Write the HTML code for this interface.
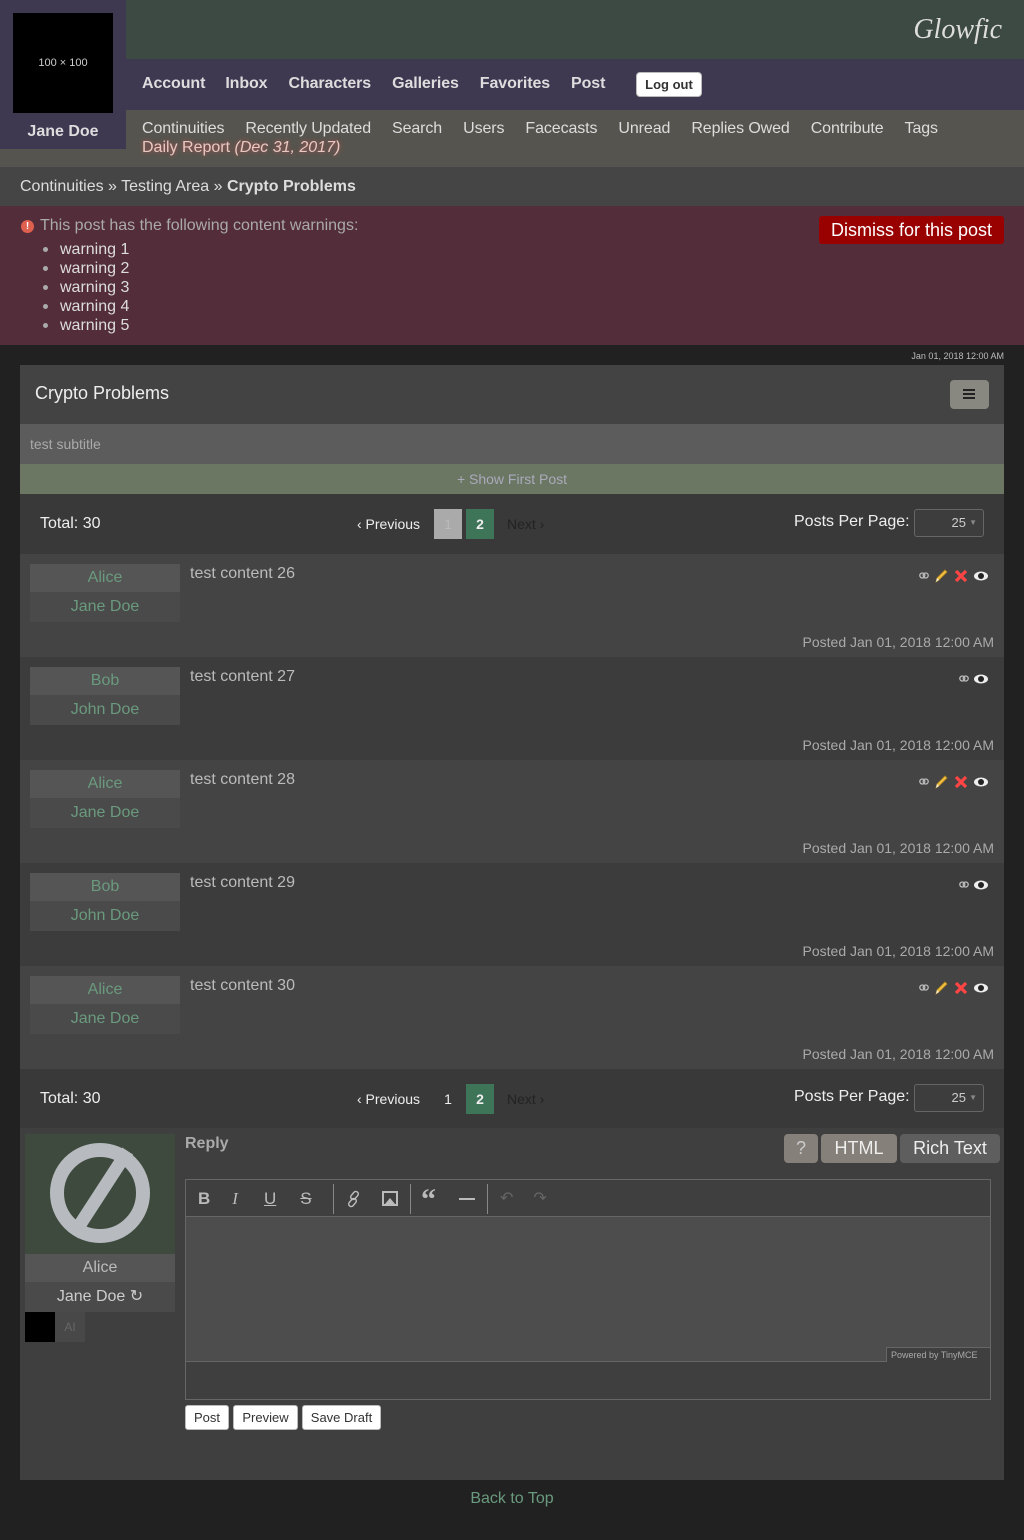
<!DOCTYPE html>
<html><head><meta charset="utf-8"><style>
*{box-sizing:border-box;margin:0;padding:0}
body{width:1024px;height:1540px;background:#212121;font-family:"Liberation Sans",sans-serif;position:relative;overflow:hidden;color:#ccc}
.a{position:absolute}
.t{white-space:nowrap}
.w{height:19px;line-height:19px}
.w span{display:inline-block;width:18px;height:19px;position:relative;vertical-align:top}
.w span:before{content:"";position:absolute;left:1px;top:7px;width:5px;height:5px;border-radius:50%;background:#aaa}
</style></head><body>
<div class="a" style="left:0;top:0;width:1024px;height:59px;background:#3c4a43"></div>
<div class="a t" style="right:22px;top:14px;font-family:'Liberation Serif',serif;font-style:italic;font-size:28px;color:#ddd">Glowfic</div>
<div class="a" style="left:0;top:59px;width:1024px;height:51px;background:#3e3851"></div>
<div class="a" style="left:0;top:110px;width:1024px;height:57px;background:#55544e"></div>
<div class="a" style="left:0;top:0;width:126px;height:149px;background:#3e3851"></div>
<div class="a" style="left:13px;top:13px;width:100px;height:100px;background:#000;color:#ccc;font-size:11px;text-align:center;line-height:100px">100 × 100</div>
<div class="a t" style="left:0;width:126px;top:123px;text-align:center;font-weight:bold;font-size:16px;color:#ddd">Jane Doe</div>
<div class="a t" style="left:142px;top:75px;font-weight:bold;font-size:16px;color:#ddd;letter-spacing:-0.1px">Account<span style="margin-left:20px">Inbox</span><span style="margin-left:21px">Characters</span><span style="margin-left:21px">Galleries</span><span style="margin-left:21px">Favorites</span><span style="margin-left:21px">Post</span></div>
<div class="a t" style="left:636px;top:72px;width:66px;height:25px;background:#fff;border:1px solid #bbb;border-radius:4px;font-size:13px;font-weight:bold;color:#333;text-align:center;line-height:23px">Log out</div>
<div class="a t" style="left:142px;top:120px;font-size:16px;color:#ddd;letter-spacing:-0.1px">Continuities<span style="margin-left:21px">Recently Updated</span><span style="margin-left:21px">Search</span><span style="margin-left:21px">Users</span><span style="margin-left:21px">Facecasts</span><span style="margin-left:21px">Unread</span><span style="margin-left:21px">Replies Owed</span><span style="margin-left:21px">Contribute</span><span style="margin-left:21px">Tags</span></div>
<div class="a t" style="left:142px;top:139px;font-size:16px;color:#e8c8c0;text-shadow:0 0 5px #b55">Daily Report <i>(Dec 31, 2017)</i></div>
<div class="a" style="left:0;top:167px;width:1024px;height:39px;background:#454545"></div>
<div class="a t" style="left:20px;top:178px;font-size:16px;color:#ddd">Continuities » Testing Area » <b>Crypto Problems</b></div>
<div class="a" style="left:0;top:206px;width:1024px;height:139px;background:#532d39"></div>
<div class="a" style="left:21px;top:220px;width:13px;height:13px;border-radius:50%;background:#e06050;color:#fff;font-size:10px;font-weight:bold;text-align:center;line-height:13px">!</div>
<div class="a t" style="left:40px;top:217px;font-size:16px;color:#aaa">This post has the following content warnings:</div>
<div class="a" style="left:42px;top:240px;font-size:16px;color:#ddd">
<div class="w"><span></span>warning 1</div><div class="w"><span></span>warning 2</div><div class="w"><span></span>warning 3</div><div class="w"><span></span>warning 4</div><div class="w"><span></span>warning 5</div></div>
<div class="a t" style="left:819px;top:216px;width:185px;height:28px;background:#900;border-radius:3px;color:#fff;font-size:18px;text-align:center;line-height:28px">Dismiss for this post</div>
<div class="a t" style="right:20px;top:351px;font-size:9px;color:#bbb">Jan 01, 2018 12:00 AM</div>
<div class="a" style="left:20px;top:365px;width:984px;height:1115px;background:#3f3f3f"></div>
<div class="a" style="left:20px;top:365px;width:984px;height:59px;background:#434343"></div>
<div class="a t" style="left:35px;top:383px;font-size:18px;color:#eee">Crypto Problems</div>
<div class="a" style="left:950px;top:380px;width:39px;height:29px;background:#888880;border-radius:4px"><div style="margin:13px 13px;width:12px;height:2px;background:#222;box-shadow:0 -4px #222,0 4px #222"></div></div>
<div class="a" style="left:20px;top:424px;width:984px;height:40px;background:#5c5c5c"></div>
<div class="a t" style="left:30px;top:436px;font-size:14px;color:#aaa">test subtitle</div>
<div class="a" style="left:20px;top:464px;width:984px;height:30px;background:#6b7663;text-align:center;font-size:14px;line-height:30px;color:#aab">+ Show First Post</div>

<div class="a" style="left:20px;top:494px;width:984px;height:60px;background:#393939"></div>
<div class="a t" style="left:40px;top:515px;font-size:16px;color:#eee">Total: 30</div>
<div class="a t" style="left:357px;top:516px;font-size:14px;color:#eee">‹ Previous</div>
<div class="a" style="left:434px;top:509px;width:28px;height:30px;background:#aaa;color:#bbb;font-size:14px;text-align:center;line-height:30px">1</div>
<div class="a" style="left:466px;top:509px;width:28px;height:30px;background:#3e7559;color:#eee;font-size:14px;font-weight:bold;text-align:center;line-height:30px">2</div>
<div class="a t" style="left:507px;top:516px;font-size:14px;color:#222">Next ›</div>
<div class="a t" style="left:794px;top:513px;font-size:16px;color:#eee">Posts Per Page:</div>
<div class="a" style="left:914px;top:509px;width:70px;height:28px;border:1px solid #666;border-radius:3px;background:#3d3d3d;color:#ccc;font-size:13px;text-align:right;padding-right:17px;line-height:26px">25<span style="position:absolute;right:6px;font-size:8px;color:#888">▼</span></div>

<div id="posts"></div>
<script>
var html='';var names=[['Alice','Jane Doe',1],['Bob','John Doe',0],['Alice','Jane Doe',1],['Bob','John Doe',0],['Alice','Jane Doe',1]];
for(var i=0;i<5;i++){var y=554+i*103;var n=names[i];
html+='<div class="a" style="left:20px;top:'+y+'px;width:984px;height:103px;background:'+(i%2?'#3c3c3c':'#444')+'"></div>';
html+='<div class="a" style="left:30px;top:'+(y+10)+'px;width:150px;height:28px;background:#555;color:#6a9a7e;font-size:16px;text-align:center;line-height:28px">'+n[0]+'</div>';
html+='<div class="a" style="left:30px;top:'+(y+38)+'px;width:150px;height:30px;background:#4a4a4a;color:#6a9a7e;font-size:16px;text-align:center;line-height:30px">'+n[1]+'</div>';
html+='<div class="a t" style="left:190px;top:'+(y+11)+'px;font-size:16px;color:#bbb">test content '+(26+i)+'</div>';
html+='<div class="a t" style="right:30px;top:'+(y+80)+'px;font-size:14px;color:#aaa">Posted Jan 01, 2018 12:00 AM</div>';
var ic='<svg width="10" height="8" viewBox="0 0 10 8" style="vertical-align:middle"><rect x="0.8" y="1" width="5" height="5" rx="2.5" fill="none" stroke="#bbb" stroke-width="1.3"/><rect x="4.2" y="1" width="5" height="5" rx="2.5" fill="none" stroke="#bbb" stroke-width="1.3"/></svg>';
if(n[2]) ic+='<svg width="16" height="16" viewBox="0 0 16 16" style="vertical-align:middle;margin-left:4px"><path d="M3 14 L4 10 L12 2 L14 4 L6 12 Z" fill="#f0c040" stroke="#b08020" stroke-width="0.8"/><path d="M3 14 L4 10 L6 12Z" fill="#eed"/></svg><svg width="16" height="16" viewBox="0 0 16 16" style="vertical-align:middle;margin-left:4px"><path d="M3 3 L13 13 M13 3 L3 13" stroke="#f44" stroke-width="3.2"/></svg>';
ic+='<svg width="16" height="12" viewBox="0 0 16 12" style="vertical-align:middle;margin-left:4px"><ellipse cx="8" cy="6" rx="7" ry="4.5" fill="#eee"/><circle cx="8" cy="6" r="3" fill="#222"/></svg>';
html+='<div class="a t" style="right:35px;top:'+(y+14)+'px;line-height:16px">'+ic+'</div>';}
document.getElementById('posts').outerHTML=html;
</script>

<div class="a" style="left:20px;top:1069px;width:984px;height:59px;background:#393939"></div>
<div class="a t" style="left:40px;top:1090px;font-size:16px;color:#eee">Total: 30</div>
<div class="a t" style="left:357px;top:1091px;font-size:14px;color:#eee">‹ Previous</div>
<div class="a" style="left:434px;top:1084px;width:28px;height:30px;color:#eee;font-size:14px;text-align:center;line-height:30px">1</div>
<div class="a" style="left:466px;top:1084px;width:28px;height:30px;background:#3e7559;color:#eee;font-size:14px;font-weight:bold;text-align:center;line-height:30px">2</div>
<div class="a t" style="left:507px;top:1091px;font-size:14px;color:#222">Next ›</div>
<div class="a t" style="left:794px;top:1088px;font-size:16px;color:#eee">Posts Per Page:</div>
<div class="a" style="left:914px;top:1084px;width:70px;height:28px;border:1px solid #666;border-radius:3px;background:#3d3d3d;color:#ccc;font-size:13px;text-align:right;padding-right:17px;line-height:26px">25<span style="position:absolute;right:6px;font-size:8px;color:#888">▼</span></div>

<div class="a" style="left:25px;top:1134px;width:150px;height:120px;background:#3f4a3e"></div>
<div class="a" style="left:50px;top:1143px;width:100px;height:100px;border-radius:50%;border:14px solid #b7bbbf"></div>
<div class="a" style="left:94px;top:1143px;width:13px;height:100px;background:#b7bbbf;transform:rotate(33deg)"></div>
<div class="a" style="left:25px;top:1254px;width:150px;height:28px;background:#555;color:#bbb;font-size:16px;text-align:center;line-height:28px">Alice</div>
<div class="a" style="left:25px;top:1282px;width:150px;height:30px;background:#4a4a4a;color:#ccc;font-size:16px;text-align:center;line-height:30px">Jane Doe ↻</div>
<div class="a" style="left:25px;top:1312px;width:30px;height:30px;background:#000"></div>
<div class="a" style="left:55px;top:1312px;width:30px;height:30px;background:#484848;color:#666;font-size:12px;text-align:center;line-height:30px">AI</div>
<div class="a t" style="left:185px;top:1135px;font-size:16px;font-weight:bold;color:#aaa">Reply</div>
<div class="a" style="left:784px;top:1134px;width:34px;height:29px;background:#858079;border-radius:4px;color:#ccc;font-size:18px;text-align:center;line-height:29px">?</div>
<div class="a" style="left:821px;top:1134px;width:76px;height:29px;background:#858079;border-radius:4px;color:#eee;font-size:18px;text-align:center;line-height:29px">HTML</div>
<div class="a" style="left:900px;top:1134px;width:100px;height:29px;background:#5e5e5e;border-radius:4px;color:#eee;font-size:18px;text-align:center;line-height:29px">Rich Text</div>
<div class="a" style="left:185px;top:1179px;width:806px;height:221px;border:1px solid #666;background:#3f3f3f"></div>
<div class="a" style="left:186px;top:1216px;width:804px;height:146px;background:#4d4d4d;border-top:1px solid #666;border-bottom:1px solid #666"></div>
<div class="a t" style="left:198px;top:1189px;font-size:17px;color:#bbb;line-height:20px">
<b>B</b><i style="margin-left:22px;font-family:'Liberation Serif',serif">I</i><u style="margin-left:26px">U</u><s style="margin-left:24px">S</s></div>
<div class="a" style="left:333px;top:1184px;width:1px;height:30px;background:#888"></div>
<svg class="a" style="left:345px;top:1190px" width="18" height="18" viewBox="0 0 18 18"><g fill="none" stroke="#bbb" stroke-width="1.5"><rect x="7" y="1" width="5" height="9" rx="2.5" transform="rotate(40 9.5 5.5)"/><rect x="5" y="8" width="5" height="9" rx="2.5" transform="rotate(40 7.5 12.5)"/></g></svg>
<div class="a" style="left:382px;top:1191px;width:16px;height:15px;border:2px solid #bbb"></div>
<svg class="a" style="left:385px;top:1196px" width="10" height="8"><path d="M0 8 L5 2 L10 8Z" fill="#bbb"/></svg>
<div class="a" style="left:410px;top:1184px;width:1px;height:30px;background:#888"></div>
<div class="a t" style="left:421px;top:1185px;font-size:30px;font-weight:bold;color:#bbb;font-family:'Liberation Serif',serif;line-height:30px">“</div>
<div class="a" style="left:459px;top:1198px;width:16px;height:2px;background:#bbb"></div>
<div class="a" style="left:487px;top:1184px;width:1px;height:30px;background:#888"></div>
<div class="a t" style="left:500px;top:1188px;font-size:16px;color:#666">↶<span style="margin-left:20px">↷</span></div>
<div class="a t" style="left:886px;top:1347px;width:104px;height:15px;border-left:1px solid #666;border-top:1px solid #666;font-size:9px;color:#aaa;padding-left:4px;line-height:14px;background:#3f3f3f">Powered by TinyMCE</div>
<div class="a" style="left:185px;top:1405px;width:44px;height:25px;background:#fff;border:1px solid #bbb;border-radius:3px;color:#333;font-size:13px;text-align:center;line-height:23px">Post</div>
<div class="a" style="left:233px;top:1405px;width:65px;height:25px;background:#fff;border:1px solid #bbb;border-radius:3px;color:#333;font-size:13px;text-align:center;line-height:23px">Preview</div>
<div class="a" style="left:302px;top:1405px;width:79px;height:25px;background:#fff;border:1px solid #bbb;border-radius:3px;color:#333;font-size:13px;text-align:center;line-height:23px">Save Draft</div>
<div class="a t" style="left:0;width:1024px;top:1490px;text-align:center;font-size:16px;color:#6a9a7e">Back to Top</div>
</body></html>
